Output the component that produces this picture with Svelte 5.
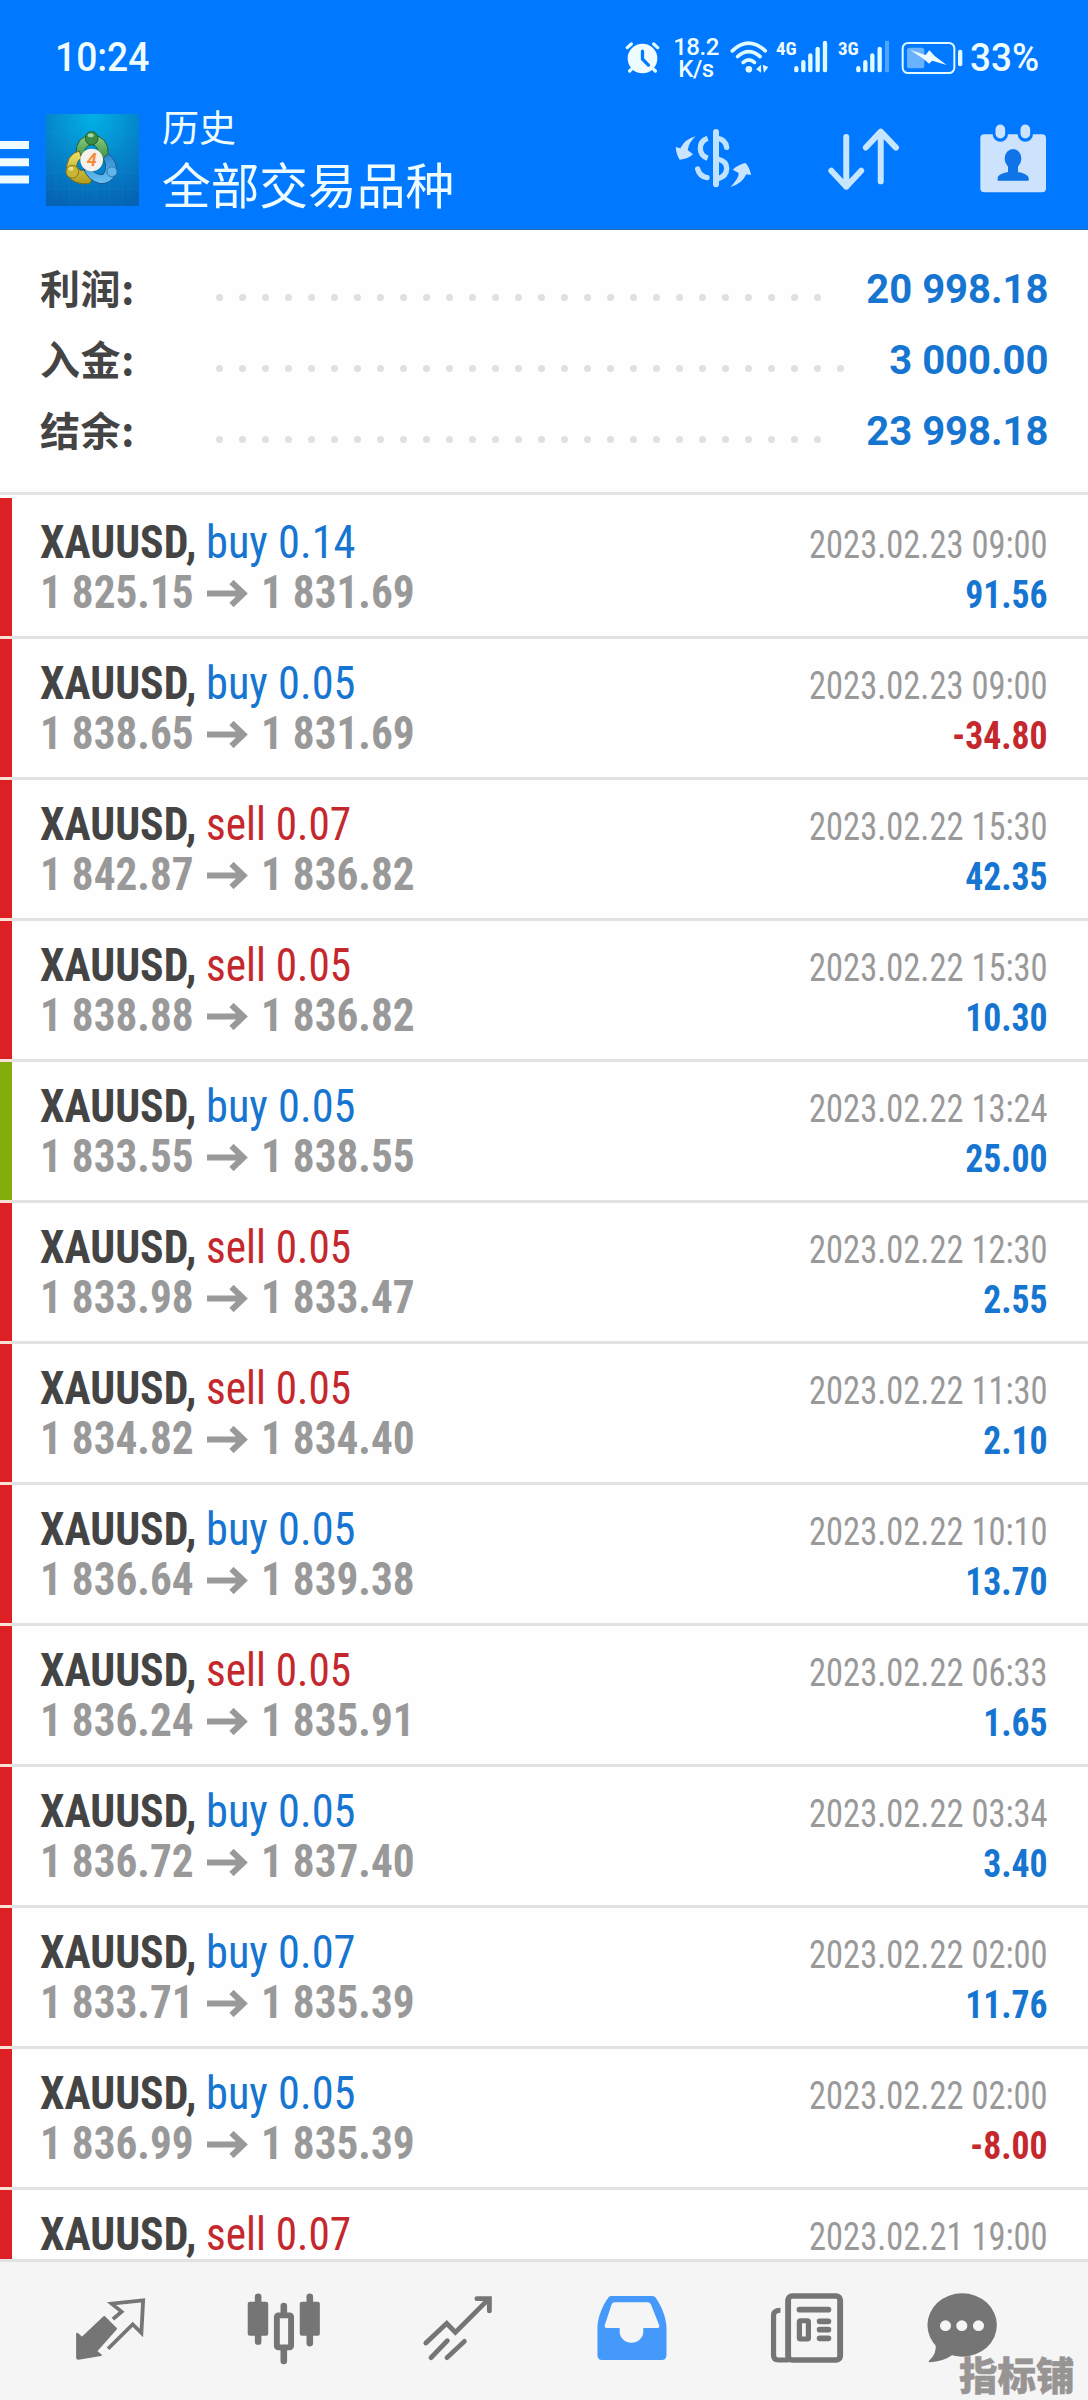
<script>
  const trades = [
    ['buy', '0.14', '1 825.15', '1 831.69', '2023.02.23 09:00', '91.56'],
    ['buy', '0.05', '1 838.65', '1 831.69', '2023.02.23 09:00', '-34.80'],
    ['sell', '0.07', '1 842.87', '1 836.82', '2023.02.22 15:30', '42.35'],
    ['sell', '0.05', '1 838.88', '1 836.82', '2023.02.22 15:30', '10.30'],
    ['buy', '0.05', '1 833.55', '1 838.55', '2023.02.22 13:24', '25.00', true],
    ['sell', '0.05', '1 833.98', '1 833.47', '2023.02.22 12:30', '2.55'],
    ['sell', '0.05', '1 834.82', '1 834.40', '2023.02.22 11:30', '2.10'],
    ['buy', '0.05', '1 836.64', '1 839.38', '2023.02.22 10:10', '13.70'],
    ['sell', '0.05', '1 836.24', '1 835.91', '2023.02.22 06:33', '1.65'],
    ['buy', '0.05', '1 836.72', '1 837.40', '2023.02.22 03:34', '3.40'],
    ['buy', '0.07', '1 833.71', '1 835.39', '2023.02.22 02:00', '11.76'],
    ['buy', '0.05', '1 836.99', '1 835.39', '2023.02.22 02:00', '-8.00'],
    ['sell', '0.07', '', '', '2023.02.21 19:00', '']
  ].map(([side, volume, open, close, time, profit, target]) => ({ side, volume, open, close, time, profit, target }));

  const summary = [
    { label: '利润:', value: '20 998.18', dots: 27 },
    { label: '入金:', value: '3 000.00', dots: 28 },
    { label: '结余:', value: '23 998.18', dots: 27 }
  ];
</script>

<div class="screen">
  <header>
    <div class="status">
      <span class="clock">10:24</span>
      <div class="indicators">
        <svg class="alarm" viewBox="72 122 106 100">
          <circle cx="125" cy="175" r="45" fill="#effcff" />
          <path d="M79 142 L91 131 M171 142 L159 131 M91 208 L86 213 M159 208 L164 213" class="st" stroke-width="10" />
          <path d="M125 153 V177 L143 195" fill="none" stroke="#0078ff" stroke-width="10" stroke-linecap="round" stroke-linejoin="round" />
        </svg>
        <div class="speed"><span>18.2</span><span>K/s</span></div>
        <svg class="wifi" viewBox="386 118 118 100">
          <path d="M393 151 Q442 104 493 151 M409 168 Q442 138 477 168 M426 186 Q443 171 460 186" class="st" stroke-width="11" />
          <circle cx="443" cy="207" r="10" fill="#dffbff" />
          <path d="M465 207 L480 193 V217 Z M485 193 L502 200 L489 217 Z" fill="#dffbff" />
        </svg>
        <span class="net">4G</span>
        <svg class="signal" viewBox="579 120 102 98">
          <path d="M586 204V210 M607 186V210 M628 166V210 M650 146V210 M672 128V210" class="st" stroke-width="13" />
        </svg>
        <span class="net second">3G</span>
        <svg class="signal" viewBox="765 120 102 98">
          <path d="M772 204V210 M793 186V210 M814 166V210 M836 146V210" class="st" stroke-width="13" />
          <path d="M858 122V216" stroke="#4fa4ff" stroke-width="12" />
        </svg>
        <svg class="battery" viewBox="900 122 186 102">
          <rect x="905" y="128" width="155" height="90" rx="16" fill="none" stroke="#dffbff" stroke-width="6" />
          <rect x="918" y="142" width="52" height="62" rx="8" fill="#69b2ff" />
          <path d="M928 149 L974 164 L985 150 L1002 168 L1037 194 L994 181 L984 190 L968 176 Z" fill="#effcff" />
          <rect x="1071" y="148" width="13" height="50" rx="6" fill="#dffbff" />
        </svg>
        <span class="percent">33%</span>
      </div>
    </div>

    <div class="toolbar">
      <svg class="menu" viewBox="0 0 29 43"><path d="M0 4H29M0 21.2H29M0 38.4H29" stroke="#effcff" stroke-width="8" /></svg>
      <svg class="logo" viewBox="18 27 279 276">
        <defs>
          <radialGradient id="sky" cx=".5" cy=".05" r="1"><stop offset="0" stop-color="#02b0e6" /><stop offset=".5" stop-color="#0585cb" /><stop offset="1" stop-color="#0562b4" /></radialGradient>
          <linearGradient id="leaf" x1="0" y1="0" x2="0" y2="1"><stop offset="0" stop-color="#8fce84" /><stop offset="1" stop-color="#2c8436" /></linearGradient>
          <linearGradient id="gold" x1="0" y1="0" x2="0" y2="1"><stop offset="0" stop-color="#ece36a" /><stop offset="1" stop-color="#b39b1c" /></linearGradient>
          <linearGradient id="sea" x1="0" y1="0" x2="0" y2="1"><stop offset="0" stop-color="#2d86cb" /><stop offset="1" stop-color="#6bc3f2" /></linearGradient>
        </defs>
        <rect x="18" y="27" width="279" height="276" fill="url(#sky)" />
        <path d="M48 27V303M88 27V303M128 27V303M168 27V303M208 27V303M248 27V303M18 82H297M18 122H297M18 202H297M18 252H297" stroke="#4cc0ee" stroke-opacity=".14" stroke-width="2" />
        <g stroke-linejoin="round" stroke-width="3">
          <path d="M108 148 Q106 94 155 90 Q206 94 205 148 Q200 168 182 176 L170 150 Q182 126 155 118 Q134 122 132 148 Z" fill="url(#leaf)" stroke="#1d6134" />
          <path d="M118 138 Q76 148 79 206 Q100 242 148 236 L158 222 Q140 206 132 196 Q120 200 110 186 Q108 170 124 158 Z" fill="url(#gold)" stroke="#716a20" />
          <path d="M205 146 Q234 168 229 206 Q212 238 180 236 Q144 226 132 194 L152 190 Q168 212 190 208 Q204 186 190 160 Z" fill="url(#sea)" stroke="#185590" />
          <ellipse cx="155" cy="100" rx="19" ry="20" fill="#3c8c48" stroke="#1d6134" />
          <circle cx="97" cy="200" r="19" fill="#c9b637" stroke="#857820" />
          <circle cx="216" cy="200" r="15" fill="#62b5eb" stroke="#2b77b8" />
        </g>
        <ellipse cx="152" cy="91" rx="9" ry="6" fill="#a6d6a2" />
        <ellipse cx="93" cy="191" rx="8" ry="6" fill="#eee084" />
        <circle cx="155" cy="165" r="34" fill="#f5f1ec" />
        <text x="155" y="184" text-anchor="middle" font-size="54" font-weight="700" font-style="italic" font-family="Roboto" fill="#f08c3c">4</text>
      </svg>
      <div class="titles"><span class="small">历史</span><span class="big">全部交易品种</span></div>
      <svg class="dollar" viewBox="0 0 300 255">
        <g fill="none" stroke="#bfe3ff" stroke-width="16">
          <path d="M153 51V208" stroke-width="18" stroke-linecap="round" />
          <path d="M128 70 Q106 78 106 100 Q106 122 128 130" />
          <path d="M158 70 Q182 74 185 97 M98 162 Q104 184 126 188" stroke-linecap="round" />
          <path d="M158 132 Q185 138 185 160 Q185 184 158 192" />
        </g>
        <path d="M92 64 Q72 82 68 105 L84 118 Q70 132 44 134 Q34 120 32 96 L46 100 Q60 72 92 64Z M196 216 Q222 190 221 174 L203 164 Q222 147 242 144 Q255 160 258 180 L244 178 Q230 208 196 216Z" fill="#c8e4ff" />
      </svg>
      <svg class="sort" viewBox="680 385 218 187">
        <path d="M737 412V562M692 514L737 562L782 514M841 546V396M796 444L841 396L887 444" fill="none" stroke="#c6e6ff" stroke-width="18" stroke-linecap="round" stroke-linejoin="round" />
      </svg>
      <svg class="contact" viewBox="1140 373 198 207">
        <rect x="1141" y="404" width="197" height="174" rx="12" fill="#cde2fc" />
        <path d="M1201 390V403M1276 390V403" stroke="#0078ff" stroke-width="46" stroke-linecap="round" />
        <path d="M1201 389V402M1276 389V402" stroke="#cde2fc" stroke-width="29" stroke-linecap="round" />
        <ellipse cx="1239" cy="477" rx="25" ry="29" fill="#0f74e8" />
        <path d="M1193 543V533Q1196 523 1224 517V494H1254V517Q1284 523 1286 534V543Z" fill="#0f74e8" />
      </svg>
    </div>
  </header>

  <section class="summary">
    {#each summary as s}
      <div class="sum-row">
        <span class="label">{s.label}</span>
        <span class="dots">{#each Array(s.dots) as _}<i></i>{/each}</span>
        <span class="total">{s.value}</span>
      </div>
    {/each}
  </section>

  <main>
    {#each trades as t}
      <article>
        <div class="mark" class:green={t.target}></div>
        <div class="body">
          <div class="left">
            <p><b><span class="sq">XAUUSD,</span></b><span class="order {t.side}">{t.side} {t.volume}</span></p>
            {#if t.open}
              <p class="price"><span class="open">{t.open}</span><svg class="arrow" viewBox="0 0 41 27"><path d="M0 13.500H37M24.500 2L36.500 13.500L24.500 25" fill="none" stroke="#999" stroke-width="6" /></svg><span class="close">{t.close}</span></p>
            {/if}
          </div>
          <div class="right">
            <p class="time">{t.time}</p>
            {#if t.profit}<p class="profit" class:neg={t.profit.startsWith('-')}>{t.profit}</p>{/if}
          </div>
        </div>
      </article>
    {/each}
  </main>

  <nav>
    <svg class="n-trade" viewBox="210 330 214 230" preserveAspectRatio="none">
      <path d="M300 411 L334 446 L276 514 L290 525 L225 536 Q222 536 222 533 V461 L236 474 Z" fill="#757575" stroke="#757575" stroke-width="6" stroke-linejoin="round" />
      <path d="M325 417L350 395L321 371L412 361L407 459L382 433L311 506" fill="none" stroke="#757575" stroke-width="11" />
    </svg>
    <svg class="n-candles" viewBox="708 330 218 230" preserveAspectRatio="none">
      <path d="M743 350V485M892 350V490M817 378V400M817 508V543" stroke="#757575" stroke-width="19" stroke-linecap="round" />
      <rect x="713" y="365" width="59" height="102" rx="6" fill="#757575" />
      <rect x="863" y="365" width="58" height="102" rx="6" fill="#757575" />
      <rect x="797" y="406" width="41" height="96" rx="4" fill="#f5f5f5" stroke="#757575" stroke-width="17" />
    </svg>
    <svg class="n-chart" viewBox="1214 330 210 230" preserveAspectRatio="none">
      <path d="M1228 489L1288 430L1313 457L1408 358M1375 356H1411V393M1243 533L1290 482M1289 533L1339 484" fill="none" stroke="#757575" stroke-width="14" stroke-linecap="round" stroke-linejoin="miter" />
    </svg>
    <svg class="n-inbox" viewBox="145 330 220 230" preserveAspectRatio="none">
      <path fill-rule="evenodd" fill="#4599fb" d="M155 440C157 410 168 380 187 352Q190 348 196 348H314Q320 348 323 353C341 380 352 410 354 440V526Q354 540 340 540H168Q155 540 155 526ZM205 367H300Q306 367 309 373L333 436Q335 444 328 444H287V455A34 33 0 0 1 219 455V444H182Q174 444 176 436L196 373Q198 367 205 367Z" />
    </svg>
    <svg class="n-news" viewBox="645 330 224 230" preserveAspectRatio="none">
      <g fill="none" stroke="#757575">
        <rect x="703" y="348" width="150" height="192" rx="12" stroke-width="17" />
        <path d="M681 391Q661 391 661 406V526Q661 540 675 540H705" stroke-width="15" />
        <path d="M736 389H819M794 424H819M794 449H819M794 475H819" stroke-width="17" stroke-linecap="round" />
        <rect x="735.500" y="422" width="26" height="55" rx="3" stroke-width="15" />
      </g>
    </svg>
    <svg class="n-chat" viewBox="1098 330 216 230" preserveAspectRatio="none">
      <ellipse cx="1205" cy="435" rx="100" ry="95" fill="#757575" />
      <path d="M1128 488Q1134 520 1109 543Q1107 547 1112 547Q1150 545 1176 526Z" fill="#757575" />
      <g fill="#f5f5f5"><circle cx="1157" cy="437" r="16" /><circle cx="1204" cy="437" r="16" /><circle cx="1252" cy="437" r="16" /></g>
    </svg>
    <span class="watermark">指标铺</span>
  </nav>
</div>

<style>
  :global(body) { background: #fefefe; }
  .screen { width: 1088px; height: 2400px; display: flex; flex-direction: column; overflow: hidden; font-family: Roboto, "Noto Sans CJK SC", sans-serif; }
  svg { display: block; flex: none; }
  header { box-sizing: border-box; height: 230px; background: #0078ff; border-bottom: 1px solid #2a68b4; color: #effcff; flex: none; }
  .st { fill: none; stroke: #dffbff; stroke-linecap: round; }

  .status { display: flex; justify-content: space-between; box-sizing: border-box; height: 110px; padding: 38px 46px 0 55px; font-weight: 500; }
  .clock { font-size: 40px; line-height: 40px; transform: scaleX(.93); transform-origin: left; }
  .indicators { display: flex; }
  .alarm { width: 35px; height: 33px; margin-top: 3px; }
  .speed { display: flex; flex-direction: column; align-items: center; width: 48px; margin: -2px 0 0 12px; font-size: 24px; line-height: 22px; letter-spacing: -.5px; }
  .wifi { width: 39px; height: 33px; margin: 2px 0 0 10px; }
  .net { width: 18px; margin: 2px 0 0 7px; font-size: 19px; line-height: 18px; font-weight: 700; font-stretch: 75%; }
  .second { margin-left: 10px; }
  .signal { width: 34px; height: 33px; margin-top: 2px; }
  .battery { width: 62px; height: 34px; margin: 3px 0 0 11px; }
  .percent { width: 72px; margin-left: 7px; font-size: 38px; line-height: 40px; transform: scaleX(.97); transform-origin: left; }

  .toolbar { display: flex; align-items: flex-start; padding-right: 42px; }
  .menu { width: 29px; height: 43px; margin-top: 31px; }
  .logo { width: 93px; height: 92px; margin: 4px 0 0 17px; }
  .titles { display: flex; flex-direction: column; flex: 1; margin-left: 23px; font-family: "Noto Sans CJK SC", sans-serif; }
  .small { font-size: 37px; line-height: 36px; margin-top: -2px; }
  .big { font-size: 48.700px; line-height: 50px; margin-top: 14px; }
  .dollar { width: 100px; height: 85px; margin-top: 5px; }
  .sort { width: 73px; height: 62px; margin: 18px 0 0 62px; }
  .contact { width: 66px; height: 69px; margin: 14px 0 0 80px; }

  .summary { box-sizing: border-box; height: 265px; padding-top: 23.500px; flex: none; border-bottom: 3px solid #e4e4e4; }
  .sum-row { display: flex; height: 71px; align-items: center; padding: 0 39.500px 0 40px; font-size: 40px; font-weight: 700; }
  .label { width: 176.300px; padding-bottom: 5px; font-family: "Noto Sans CJK SC", sans-serif; color: #444; letter-spacing: .6px; }
  .dots { display: flex; gap: 16px; flex: 1; padding-top: 16px; }
  .dots i { width: 7px; height: 7px; border-radius: 50%; background: #e0e0e0; }
  .total { color: #1575d0; padding-top: 1px; }

  main { flex: 1; min-height: 0; overflow: hidden; padding-top: 3px; }
  article { display: flex; height: 141px; font-stretch: 75%; }
  .mark { width: 12px; height: 138px; background: #dc2023; border-bottom: 3px solid #fbe0d6; }
  .green { background: #83ad0a; }
  .body { flex: 1; height: 138px; border-bottom: 3px solid #e2e2e2; display: flex; justify-content: space-between; padding: 0 40px 0 28px; }
  p { display: flex; margin: 0; height: 50px; line-height: 50px; font-size: 46px; white-space: nowrap; }
  .left { padding-top: 18.600px; color: #444; }
  b { width: 166px; }
  .sq { display: inline-block; transform: scaleX(.95); transform-origin: left; }
  .order { transform: scaleX(.965); transform-origin: left; }
  .buy { color: #1575d0; }
  .sell { color: #c4272c; transform: scaleX(.94); }
  .price { color: #999; font-weight: 700; }
  .open { width: 167px; transform: scaleX(.94); transform-origin: left; }
  .open, .close, .order { display: block; }
  .arrow { width: 41px; height: 27px; margin-top: 13px; }
  .close { margin-left: 12.500px; transform: scaleX(.94); transform-origin: left; }
  .right { padding-top: 22px; }
  .right p { font-size: 39px; display: block; text-align: right; transform-origin: right; }
  .time { color: #999; transform: scaleX(.885); }
  .profit { color: #1575d0; font-weight: 700; transform: scaleX(.915); }
  .profit.neg { color: #c4272c; }

  nav { position: relative; box-sizing: border-box; flex: none; height: 141px; border-top: 3px solid #e2e2e2; background: #f5f5f5; display: flex; padding: 28px 0 0 73px; }
  nav svg { height: 76.700px; }
  .n-trade { width: 74.300px; }
  .n-candles { width: 75.600px; margin-left: 98.500px; }
  .n-chart { width: 72.900px; margin-left: 99.900px; }
  .n-inbox { width: 76.300px; margin-left: 100.200px; }
  .n-news { width: 77.700px; margin-left: 97.100px; }
  .n-chat { width: 75px; margin-left: 79.500px; }
  .watermark { position: absolute; left: 959px; top: 91px; font: 900 38.500px/40px "Noto Sans CJK SC", sans-serif; color: #979493; -webkit-text-stroke: .5px #979493; }
</style>
